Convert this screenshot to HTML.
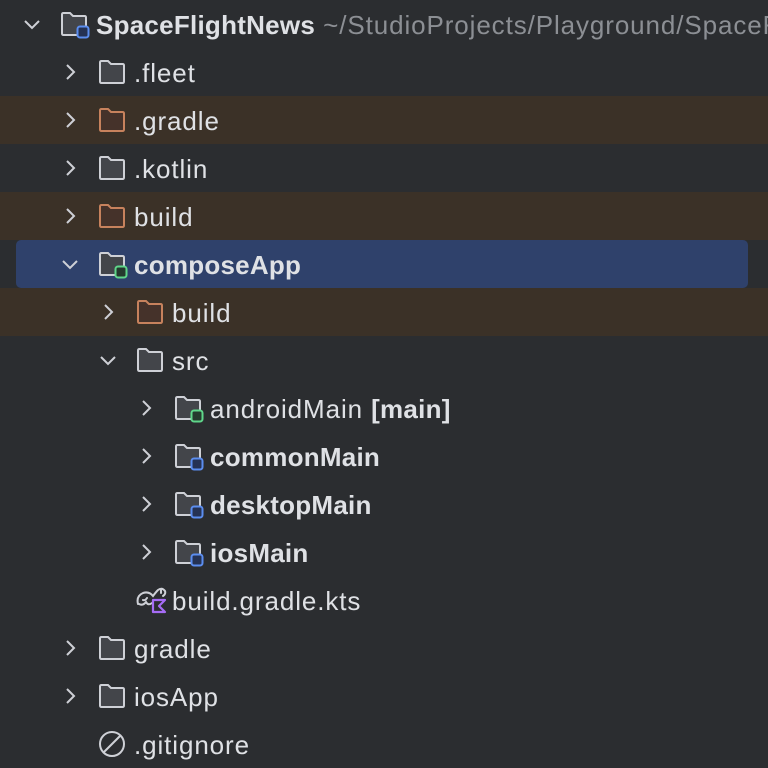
<!DOCTYPE html>
<html><head><style>
body{margin:0;width:768px;height:760px;background:#2b2d30;overflow:hidden;font-family:"Liberation Sans",sans-serif;color:#dfe1e5;font-size:26px;letter-spacing:0.9px;position:relative}
.r{position:absolute;left:0;width:768px;height:48px;overflow:hidden}
.hl{background:#3b3127}
.sel{background:#2f416b;left:16px;width:732px;border-radius:5px}
.ch{position:absolute;top:14px}
.ic{position:absolute;top:11px}
.t{position:absolute;top:11px;line-height:28px;white-space:nowrap}
b{font-weight:bold;letter-spacing:0.25px}
.g{color:#8c8f94}
</style></head><body>
<svg width="0" height="0" style="position:absolute">
<defs>
<symbol id="fd" viewBox="0 0 28 26"><path d="M2 3.5Q2 2 3.5 2H10L13 5H24.5Q26 5 26 6.5V22.5Q26 24 24.5 24H3.5Q2 24 2 22.5Z" fill="#43454a" stroke="#ced0d6" stroke-width="2"/></symbol>
<symbol id="fo" viewBox="0 0 28 26"><path d="M2 3.5Q2 2 3.5 2H10L13 5H24.5Q26 5 26 6.5V22.5Q26 24 24.5 24H3.5Q2 24 2 22.5Z" fill="#45322a" stroke="#c7825d" stroke-width="2"/></symbol>
<symbol id="cr" viewBox="0 0 20 20"><path d="M7 3L14 10L7 17" fill="none" stroke="#ced0d6" stroke-width="2"/></symbol>
<symbol id="cd" viewBox="0 0 20 20"><path d="M3 7L10 14L17 7" fill="none" stroke="#ced0d6" stroke-width="2"/></symbol>
</defs></svg>

<div class="r" style="top:0"><svg class="ch" style="left:22px" width="20" height="20"><use href="#cd"/></svg>
<svg class="ic" style="left:60px" width="28" height="26"><use href="#fd"/></svg><svg style="position:absolute;left:76px;top:25px" width="14" height="14"><rect x="1.5" y="1.5" width="11" height="11" rx="2.5" fill="#253254" stroke="#5b8def" stroke-width="2"/></svg>
<span class="t" style="left:96px"><b>SpaceFlightNews</b> <span class="g">~/StudioProjects/Playground/SpaceFlightNews</span></span></div>

<div class="r" style="top:48px"><svg class="ch" style="left:60px" width="20" height="20"><use href="#cr"/></svg><svg class="ic" style="left:98px" width="28" height="26"><use href="#fd"/></svg><span class="t" style="left:134px">.fleet</span></div>
<div class="r hl" style="top:96px"><svg class="ch" style="left:60px" width="20" height="20"><use href="#cr"/></svg><svg class="ic" style="left:98px" width="28" height="26"><use href="#fo"/></svg><span class="t" style="left:134px">.gradle</span></div>
<div class="r" style="top:144px"><svg class="ch" style="left:60px" width="20" height="20"><use href="#cr"/></svg><svg class="ic" style="left:98px" width="28" height="26"><use href="#fd"/></svg><span class="t" style="left:134px">.kotlin</span></div>
<div class="r hl" style="top:192px"><svg class="ch" style="left:60px" width="20" height="20"><use href="#cr"/></svg><svg class="ic" style="left:98px" width="28" height="26"><use href="#fo"/></svg><span class="t" style="left:134px">build</span></div>
<div class="r sel" style="top:240px"><svg class="ch" style="left:44px" width="20" height="20"><use href="#cd"/></svg><svg class="ic" style="left:82px" width="28" height="26"><use href="#fd"/></svg><svg style="position:absolute;left:98px;top:25px" width="14" height="14"><rect x="1.5" y="1.5" width="11" height="11" rx="2.5" fill="#253a2e" stroke="#5fd68a" stroke-width="2"/></svg><span class="t" style="left:118px"><b>composeApp</b></span></div>
<div class="r hl" style="top:288px"><svg class="ch" style="left:98px" width="20" height="20"><use href="#cr"/></svg><svg class="ic" style="left:136px" width="28" height="26"><use href="#fo"/></svg><span class="t" style="left:172px">build</span></div>
<div class="r" style="top:336px"><svg class="ch" style="left:98px" width="20" height="20"><use href="#cd"/></svg><svg class="ic" style="left:136px" width="28" height="26"><use href="#fd"/></svg><span class="t" style="left:172px">src</span></div>

<div class="r" style="top:384px"><svg class="ch" style="left:136px" width="20" height="20"><use href="#cr"/></svg><svg class="ic" style="left:174px" width="28" height="26"><use href="#fd"/></svg><svg style="position:absolute;left:190px;top:25px" width="14" height="14"><rect x="1.5" y="1.5" width="11" height="11" rx="2.5" fill="#253a2e" stroke="#5fd68a" stroke-width="2"/></svg><span class="t" style="left:210px">androidMain <b>[main]</b></span></div>
<div class="r" style="top:432px"><svg class="ch" style="left:136px" width="20" height="20"><use href="#cr"/></svg><svg class="ic" style="left:174px" width="28" height="26"><use href="#fd"/></svg><svg style="position:absolute;left:190px;top:25px" width="14" height="14"><rect x="1.5" y="1.5" width="11" height="11" rx="2.5" fill="#253254" stroke="#5b8def" stroke-width="2"/></svg><span class="t" style="left:210px"><b>commonMain</b></span></div>
<div class="r" style="top:480px"><svg class="ch" style="left:136px" width="20" height="20"><use href="#cr"/></svg><svg class="ic" style="left:174px" width="28" height="26"><use href="#fd"/></svg><svg style="position:absolute;left:190px;top:25px" width="14" height="14"><rect x="1.5" y="1.5" width="11" height="11" rx="2.5" fill="#253254" stroke="#5b8def" stroke-width="2"/></svg><span class="t" style="left:210px"><b>desktopMain</b></span></div>
<div class="r" style="top:528px"><svg class="ch" style="left:136px" width="20" height="20"><use href="#cr"/></svg><svg class="ic" style="left:174px" width="28" height="26"><use href="#fd"/></svg><svg style="position:absolute;left:190px;top:25px" width="14" height="14"><rect x="1.5" y="1.5" width="11" height="11" rx="2.5" fill="#253254" stroke="#5b8def" stroke-width="2"/></svg><span class="t" style="left:210px"><b>iosMain</b></span></div>

<div class="r" style="top:576px"><svg class="ic" style="left:135px;top:8px" width="34" height="30" viewBox="0 0 34 30"><path d="M3 20Q1 12 8 9Q14 7 18 12Q21 8 23 6Q27 3 30 7Q31 10 28 12M26 6L26 9M4 20Q8 22 11 18Q13 22 17 19M12 14Q10 17 8 16" fill="none" stroke="#ced0d6" stroke-width="2" stroke-linecap="round"/><path d="M18 16H30L24 22L30 28H18Z" fill="#2b2d30" stroke="#a66cf5" stroke-width="2.2" stroke-linejoin="round"/></svg><span class="t" style="left:172px">build.gradle.kts</span></div>

<div class="r" style="top:624px"><svg class="ch" style="left:60px" width="20" height="20"><use href="#cr"/></svg><svg class="ic" style="left:98px" width="28" height="26"><use href="#fd"/></svg><span class="t" style="left:134px">gradle</span></div>
<div class="r" style="top:672px"><svg class="ch" style="left:60px" width="20" height="20"><use href="#cr"/></svg><svg class="ic" style="left:98px" width="28" height="26"><use href="#fd"/></svg><span class="t" style="left:134px">iosApp</span></div>
<div class="r" style="top:720px"><svg class="ic" style="left:98px;top:10px" width="28" height="28"><circle cx="14" cy="14" r="12" fill="none" stroke="#ced0d6" stroke-width="2"/><path d="M6 22L22 6" stroke="#ced0d6" stroke-width="2"/></svg><span class="t" style="left:134px">.gitignore</span></div>
</body></html>
